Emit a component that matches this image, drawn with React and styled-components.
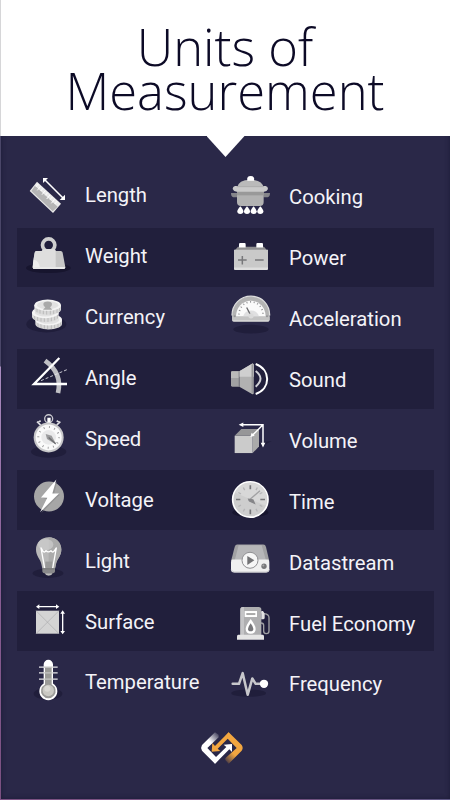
import React from "react";
import styled, { createGlobalStyle } from "styled-components";

const GlobalStyle = createGlobalStyle`
  body {
    margin: 0;
    background: #2a2848;
  }
`;

const Screen = styled.div`
  box-sizing: border-box;
  display: grid;
  grid-template-columns: 1px 1fr;
  grid-template-rows: 799px 1px;
  width: 450px;
  height: 800px;
  overflow: hidden;
  background: #2a2848;
`;

const LeftEdge = styled.div`
  background: linear-gradient(#d6d6d8 0 136px, #4a4668 136px 366px, #a98cc0 367px, #8a5f96 560px, #7a5080);
`;

const BottomEdge = styled.div`
  grid-column: 1 / 3;
  background: linear-gradient(90deg, #7d5284, #76507f 60%, #5d5784);
`;

const Page = styled.main`
  display: flex;
  flex-direction: column;
  align-items: center;
  box-shadow: inset 0 0 5px #1c1b36;
`;

const Header = styled.header`
  align-self: stretch;
  box-sizing: border-box;
  height: 136px;
  padding: 25px 1px 0 0;
  background: #fff;
`;

const Title = styled.h1`
  margin: 0;
  color: #0c0a26;
  font-family: "Open Sans", sans-serif;
  font-size: 50.7px;
  font-weight: 300;
  line-height: 44px;
  text-align: center;
`;

const Pointer = styled.div`
  width: 38px;
  height: 21px;
  background: #fff;
  clip-path: polygon(0 0, 100% 0, 50% 100%);
`;

const Table = styled.section`
  display: grid;
  grid-template-columns: 201px 1fr;
  box-sizing: border-box;
  width: 417px;
  height: 545px;
  margin-top: 10px;
  padding-left: 8px;
  background: repeating-linear-gradient(transparent 0 61px, #211f3c 61px 120.4px, transparent 120.4px 121.1px);
`;

const Column = styled.ul`
  margin: 0;
  padding: 0;
  list-style: none;
`;

const Item = styled.li`
  display: flex;
  align-items: flex-start;
  gap: ${(p) => p.$gap}px;
  height: 60.9px;
`;

const Icon = styled.svg`
  flex: none;
  width: 48px;
  height: 60px;
  overflow: visible;
`;

const Label = styled.span`
  padding-top: ${(p) => p.$top}px;
  color: #f4f3f8;
  font-family: Roboto, sans-serif;
  font-size: 20.25px;
  line-height: 24px;
  white-space: nowrap;
`;

const Logo = styled.svg`
  width: 44px;
  height: 34px;
  margin-top: 19px;
  margin-right: 7px;
`;

const shade = "#201e3b";

const LengthIcon = () => (
  <Icon viewBox="30 6 144 180">
    <path d="M66 50 L138 116 L114 144 L44 78Z" fill="#ececec" />
    <path d="M60 62 L128 125 L113 139 L49 78Z" fill="#b5b5b5" />
    <path d="M64 60 L131 122" stroke="#e9e9e9" strokeWidth="4" />
    <path
      d="M70 57l-7 8M77 64l-10 12M84 70l-7 8M91 77l-10 12M98 83l-7 8M105 90l-10 12M112 96l-7 8M119 103l-10 12M126 109l-7 8"
      stroke="#fff"
      strokeWidth="3"
    />
    <path d="M90 45 L144 99" stroke="#fff" strokeWidth="5" />
    <path d="M84 39h15L84 54ZM150 105h-16l16-16Z" fill="#fff" />
  </Icon>
);

const WeightIcon = () => (
  <Icon viewBox="30 188.7 144 180">
    <ellipse cx="100" cy="309" rx="67" ry="15" fill="#17152e" />
    <circle cx="101" cy="240" r="18.5" fill="none" stroke="#cfcfcf" strokeWidth="11" />
    <path d="M64 258h73q5 0 6 5l8 43q0 6-5 6H58q-5 0-5-6l6-43q1-5 5-5Z" fill="#c6c6c6" />
    <path d="M64 258h58v54H76q-5-28-21-28l4-21q1-5 5-5Z" fill="#dedede" />
    <path d="M55 284q18 0 21 28H58q-5 0-5-6Z" fill="#eee" />
    <path d="M80 258q2-6 9-6h25q8 0 9 6Z" fill="#dedede" />
    <path d="M53 306h98q0 6-5 6H58q-5 0-5-6Z" fill="#e8e8e8" />
  </Icon>
);

const Coin = ({ x, y }) => (
  <g transform={`translate(${x} ${y})`}>
    <path d="M-40 0v12a40 17 0 0 0 80 0V0Z" fill="#d9d9d9" />
    <path d="M-32 9v12M-23 12v13M-13 14v13M-3 15v13M8 15v13M18 13v13M28 10v13M36 7v11" stroke="#b5b5b5" strokeWidth="2.5" />
    <ellipse rx="40" ry="17" fill="#f4f4f4" />
    <ellipse rx="32" ry="12" fill="#e2e2e2" />
  </g>
);

const CurrencyIcon = () => (
  <Icon viewBox="30 11.4 144 180">
    <ellipse cx="94" cy="117" rx="60" ry="25" fill={shade} />
    <Coin x={101} y={104} />
    <Coin x={91} y={82} />
    <Coin x={98} y={60} />
    <path d="M85 57q0-8 13-8t13 8q0 6-6 9l7 8H84l7-8q-6-3-6-9Z" fill="#a9a9a9" />
  </Icon>
);

const AngleIcon = () => (
  <Icon viewBox="30 194.1 144 180">
    <path d="M90 226Q143 264 129 323" fill="none" stroke="#bfbfc4" strokeWidth="14" />
    <path d="M78 286L156 253" stroke="#e9e9ee" strokeWidth="2.5" strokeDasharray="9 6" />
    <path d="M133 218L57 296H156" fill="none" stroke="#fff" strokeWidth="7" />
  </Icon>
);

const SpeedIcon = () => (
  <Icon viewBox="30 16.8 144 180">
    <ellipse cx="101" cy="139" rx="53" ry="18" fill={shade} />
    <circle cx="101" cy="40" r="12" fill="none" stroke="#c9c9cf" strokeWidth="4" />
    <path d="M97 37h10v17H97Z" fill="#fff" />
    <path d="M69 51l8-5M66 49l11 10M133 51l-8-5M136 49l-11 10" stroke="#dcdce0" strokeWidth="5" />
    <circle cx="101" cy="96" r="45" fill="#c8c8ca" />
    <circle cx="101" cy="96" r="39" fill="#fafafa" />
    <circle cx="101" cy="96" r="31" fill="none" stroke="#8e8e90" strokeWidth="6" strokeDasharray="2.5 13.73" />
    <circle cx="101" cy="96" r="22" fill="#e9e9ea" />
    <path d="M92 86L110 91L124 118L96 101Z" fill="#9b9b9d" />
    <path d="M101 96L122 115" stroke="#6f6f72" strokeWidth="4" />
  </Icon>
);

const VoltageIcon = () => (
  <Icon viewBox="30 199.5 144 180">
    <circle cx="102" cy="276" r="45" fill="#a6a6a6" />
    <path d="M124 226L79 276L96 281L76 322L122 275L132 267L114 264Z" fill="#7f7f82" transform="translate(3 4)" opacity=".5" />
    <path d="M124 225L78 279L97 280L75 323L132 267H112Z" fill="#fff" />
  </Icon>
);

const LightIcon = () => (
  <Icon viewBox="30 22.2 144 180">
    <ellipse cx="99" cy="146" rx="46" ry="14" fill={shade} />
    <path d="M101 38c22 0 38 16 38 37 0 19-12 28-16 43l-3 14H82l-3-14C75 103 63 94 63 75c0-21 16-37 38-37Z" fill="#b9b9b9" />
    <path d="M101 38c22 0 38 16 38 37 0 19-12 28-16 43l-3 14H101Z" fill="#ababab" />
    <ellipse cx="92" cy="60" rx="23" ry="17" fill="#cdcdcd" opacity=".7" />
    <path d="M91 132V111h20v21" fill="#999" />
    <path
      d="M89 131L78 70l6 10q6 5 9-2 7 8 15 0 3 7 9 2l7-10L113 131"
      fill="none"
      stroke="#fff"
      strokeWidth="4"
      strokeLinejoin="round"
    />
    <path d="M82 131h38v10q0 5-8 6-2 6-11 6t-11-6q-8-1-8-6Z" fill="#89898b" />
    <path d="M83 133h36" stroke="#6e6e70" strokeWidth="2" />
    <path d="M90 147h22q-2 6-11 6t-11-6Z" fill="#bdbdbd" />
  </Icon>
);

const SurfaceIcon = () => (
  <Icon viewBox="30 204.9 144 180">
    <path d="M63 258h69v69H63Z" fill="#d4d4d4" />
    <path d="M63 258l69 69M132 258l-69 69" stroke="#a4a4a6" strokeWidth="1.7" />
    <path d="M69 246h58M143 264v58" stroke="#fff" strokeWidth="4" />
    <path d="M63 246l10-7v14ZM133 246l-10-7v14ZM143 257l-7 10h14ZM143 329l-7-10h14Z" fill="#fff" />
  </Icon>
);

const TemperatureIcon = () => (
  <Icon viewBox="30 27.6 144 180">
    <ellipse cx="99" cy="147" rx="43" ry="18" fill={shade} />
    <path d="M86 59a14 14 0 0 1 28 0v57a27 27 0 1 1-28 0Z" fill="#fff" />
    <path d="M90 67h20v52a22 22 0 1 1-20 0Z" fill="#9b9b98" />
    <circle cx="100" cy="137" r="17" fill="#c9c8c2" />
    <circle cx="97" cy="132" r="9" fill="#dad9d4" />
    <path d="M72 67h15M113 67h15M72 84h15M113 84h15M72 103h15M113 103h15" stroke="#e6e6e9" strokeWidth="4" />
    <path d="M87 67h26M87 84h26M87 103h26" stroke="#c5c5c3" strokeWidth="4" />
  </Icon>
);

const CookingIcon = () => (
  <Icon viewBox="18 6 144 180">
    <path d="M33 84h20v13H40q-7-2-7-13ZM130 84h20q0 11-7 13h-13Z" fill="#85858a" />
    <path d="M51 78h80v33q0 12-12 12H63q-12 0-12-12Z" fill="#b2b2b2" />
    <path d="M51 78h80v13H51Z" fill="#999" />
    <path d="M51 68q4-24 40-24t40 24Z" fill="#bababa" />
    <path d="M45 63h92q7 2 7 9-3 8-12 8H50q-9 0-12-8 0-7 7-9Z" fill="#cacaca" />
    <path d="M50 65h82" stroke="#aaa" strokeWidth="3" />
    <path d="M82 47q-3-14 10-14t10 14Z" fill="#fff" />
    {[61, 81, 101, 121].map((x) => (
      <path key={x} d={`M${x} 124q9 10 9 15 0 8-9 8t-9-8q0-5 9-15Z`} fill="#fff" />
    ))}
  </Icon>
);

const PowerIcon = () => (
  <Icon viewBox="18 188.7 144 180">
    <path d="M54 245h78l10 12H43Z" fill="#8f8f91" />
    <path d="M60 234h14q3 0 3 4v9H57v-9q0-4 3-4ZM112 234h14q3 0 3 4v9h-20v-9q0-4 3-4Z" fill="#fff" />
    <path d="M42 254h102v56q0 5-5 5H47q-5 0-5-5Z" fill="#c9c9c9" />
    <path d="M42 307h102v3q0 5-5 5H47q-5 0-5-5Z" fill="#dedede" />
    <path d="M67 273v25M54 285h26M105 285h26" stroke="#77777a" strokeWidth="4.5" />
  </Icon>
);

const AccelerationIcon = () => (
  <Icon viewBox="18 11.4 144 180">
    <ellipse cx="93" cy="132" rx="53" ry="13" fill={shade} />
    <path d="M36 91C36 57 61 33 93 33s56 24 56 58v12q0 6-6 6H42q-6 0-6-6Z" fill="#b3b3b3" />
    <path d="M36 91C36 57 61 33 93 33s56 24 56 58" fill="none" stroke="#dedede" strokeWidth="4" />
    <path d="M48 94a44 47 0 0 1 89 0Z" fill="#fafafa" />
    <path d="M57 88a36 38 0 0 1 72 0" fill="none" stroke="#929294" strokeWidth="5" strokeDasharray="3 8" />
    <path d="M69 94a25 25 0 0 1 48 0Z" fill="#e0e0e1" />
    <path d="M36 94h113v9q0 6-6 6H42q-6 0-6-6Z" fill="#c3c3c3" />
    <path d="M80 67L94 94" stroke="#66666a" strokeWidth="4" />
    <circle cx="93" cy="92" r="8" fill="#dadada" />
    <circle cx="44" cy="93" r="3" fill="#949496" />
    <circle cx="141" cy="93" r="3" fill="#949496" />
    <path d="M38 107h109" stroke="#dedede" strokeWidth="3" />
  </Icon>
);

const SoundIcon = () => (
  <Icon viewBox="18 194.1 144 180">
    <path d="M37 258h20v46H37q-4 0-4-4v-38q0-4 4-4Z" fill="#a1a1a3" />
    <path d="M33 262q0-4 4-4h20v20H33Z" fill="#bbb" />
    <path d="M58 258l38-23q5-2 5 4v84q0 6-5 3l-38-22Z" fill="#b1b1b1" />
    <path d="M58 258l38-23q5-2 5 4v35H58Z" fill="#cfcfcf" />
    <path d="M97 237v87" stroke="#98989a" strokeWidth="5" />
    <path d="M57 258v46" stroke="#77777b" strokeWidth="2" />
    <path d="M107 257q29 22 0 47" fill="none" stroke="#d1d1d7" strokeWidth="6" />
    <path d="M107 236c46 17 46 74 0 90" fill="none" stroke="#fff" strokeWidth="6" />
  </Icon>
);

const VolumeIcon = () => (
  <Icon viewBox="18 16.8 144 180">
    <path d="M110 112l45-5-37 20Z" fill={shade} />
    <path d="M44 91h54v52H44Z" fill="#cbcbcb" />
    <path d="M44 91l20-20h53L98 91Z" fill="#969698" />
    <path d="M98 91l19-20v52l-19 20Z" fill="#aaa" />
    <path d="M64 58h65v60M129 58L97 90" fill="none" stroke="#fff" strokeWidth="4.5" />
    <path d="M56 58l14-7v14ZM129 126l-7-14h14ZM91 95l4-13 9 9Z" fill="#fff" />
  </Icon>
);

const TimeIcon = () => (
  <Icon viewBox="18 199.5 144 180">
    <ellipse cx="91" cy="324" rx="54" ry="14" fill="#17152e" />
    <circle cx="91" cy="285" r="53" fill="#cecece" stroke="#fff" strokeWidth="5" />
    <path d="M45 264A50 50 0 0 1 137 304Z" fill="#d8d8d8" />
    <path d="M91 242v12M91 315v14M48 285h13M121 285h14" stroke="#77777a" strokeWidth="5" />
    <path
      d="M70 249l4 8M112 249l-4 8M55 264l8 4M127 264l-8 4M55 306l8-4M127 306l-8-4M70 321l4-8M112 321l-4-8"
      stroke="#b6b6b8"
      strokeWidth="4"
    />
    <path d="M86 288L120 259" stroke="#a1a1a3" strokeWidth="4" />
    <path d="M83 282l17 2 7 16-20-9Z" fill="#858588" />
  </Icon>
);

const DatastreamIcon = () => (
  <Icon viewBox="18 22.2 144 180">
    <path d="M52 60h78q6 0 8 7l10 43H33l11-43q2-7 8-7Z" fill="#a1a1a3" />
    <path d="M56 62h69l13 46H44Z" fill="#b7b7b9" />
    <path d="M36 105h109q3 3 3 9v21q0 9-9 9H42q-9 0-9-9v-21q0-6 3-9Z" fill="#f0f0f0" />
    <path d="M34 135q2 7 10 7h94q8 0 10-7" fill="none" stroke="#cfcfd1" strokeWidth="3" />
    <circle cx="90" cy="107" r="24" fill="#f6f6f6" stroke="#8f8f92" strokeWidth="3" />
    <path d="M82 94v27l21-14Z" fill="#727275" />
    <circle cx="132" cy="125" r="8" fill="#77777a" />
    <circle cx="130" cy="123" r="3" fill="#aaa" />
  </Icon>
);

const FuelIcon = () => (
  <Icon viewBox="18 204.9 144 180">
    <path d="M68 247h48q8 0 8 8v78H61v-78q0-8 7-8Z" fill="#aeaeb0" />
    <path d="M61 255q0-8 7-8h4v86H61Z" fill="#c5c5c7" />
    <path d="M74 259h37v18H74Z" fill="#fff" />
    <path d="M79 265h27v6H79Z" fill="#aaa" />
    <path d="M92 283q15 20 15 30 0 14-15 14t-15-14q0-10 15-30Z" fill="#fff" />
    <path d="M92 296q8 11 8 16 0 8-8 8t-8-8q0-5 8-16Z" fill="#77777b" />
    <path d="M55 330h73q4 1 4 5v10H51v-10q0-4 4-5Z" fill="#e5e5e5" />
    <path d="M123 263l10 4q14 2 14 12v40q0 8-8 8t-8-8v-17q0-7-8-7" fill="none" stroke="#a1a1a4" strokeWidth="4" />
    <path d="M124 259h5l5 8v12q0 5-5 5h-5Z" fill="#e2e2e2" />
  </Icon>
);

const FrequencyIcon = () => (
  <Icon viewBox="108 27.6 144 180">
    <ellipse cx="176" cy="145" rx="52" ry="11" fill={shade} />
    <path
      d="M128 117h19l11-32 15 65 14-49 10 16h24"
      fill="none"
      stroke="#c7c7cb"
      strokeWidth="7.5"
      strokeLinecap="round"
      strokeLinejoin="round"
    />
    <circle cx="222" cy="117" r="12.5" fill="#fff" />
  </Icon>
);

const leftUnits = [
  ["Length", LengthIcon],
  ["Weight", WeightIcon],
  ["Currency", CurrencyIcon],
  ["Angle", AngleIcon],
  ["Speed", SpeedIcon],
  ["Voltage", VoltageIcon],
  ["Light", LightIcon],
  ["Surface", SurfaceIcon],
  ["Temperature", TemperatureIcon],
];

const rightUnits = [
  ["Cooking", CookingIcon],
  ["Power", PowerIcon],
  ["Acceleration", AccelerationIcon],
  ["Sound", SoundIcon],
  ["Volume", VolumeIcon],
  ["Time", TimeIcon],
  ["Datastream", DatastreamIcon],
  ["Fuel Economy", FuelIcon],
  ["Frequency", FrequencyIcon],
];

const UnitColumn = ({ units, gap, top }) => (
  <Column>
    {units.map(([name, Drawing]) => (
      <Item key={name} $gap={gap}>
        <Drawing />
        <Label $top={top}>{name}</Label>
      </Item>
    ))}
  </Column>
);

const BrandLogo = () => (
  <Logo viewBox="30 258 132 102">
    <defs>
      <linearGradient id="whiteFade" gradientUnits="userSpaceOnUse" x1="62" y1="292" x2="88" y2="266">
        <stop offset="0" stopColor="#fff" />
        <stop offset="1" stopColor="#fff" stopOpacity="0.05" />
      </linearGradient>
      <linearGradient id="orangeFade" gradientUnits="userSpaceOnUse" x1="130" y1="326" x2="104" y2="352">
        <stop offset="0" stopColor="#f2a640" />
        <stop offset="1" stopColor="#f2a640" stopOpacity="0.05" />
      </linearGradient>
    </defs>
    <path d="M86 269L75 262L36 300q-5 8 0 17L75 356L86 344L52 309L86 277Z" fill="url(#whiteFade)" />
    <path d="M106 345L116 356L155 317q6-8 0-17L116 262L106 274L140 309L106 340Z" fill="url(#orangeFade)" />
    <path d="M69 344L75 356L118 313L126 321V297L101 299L109 306L75 339L66 330Z" fill="#fff" />
    <path d="M122 274L116 262L75 303L67 294L65 320L91 318L83 311L116 278L126 287Z" fill="#f2a640" />
  </Logo>
);

export default function App() {
  return (
    <Screen>
      <GlobalStyle />
      <LeftEdge />
      <Page>
        <Header>
          <Title>
            Units of
            <br />
            Measurement
          </Title>
        </Header>
        <Pointer />
        <Table>
          <UnitColumn units={leftUnits} gap={12} top={16.3} />
          <UnitColumn units={rightUnits} gap={15} top={18.3} />
        </Table>
        <BrandLogo />
      </Page>
      <BottomEdge />
    </Screen>
  );
}
